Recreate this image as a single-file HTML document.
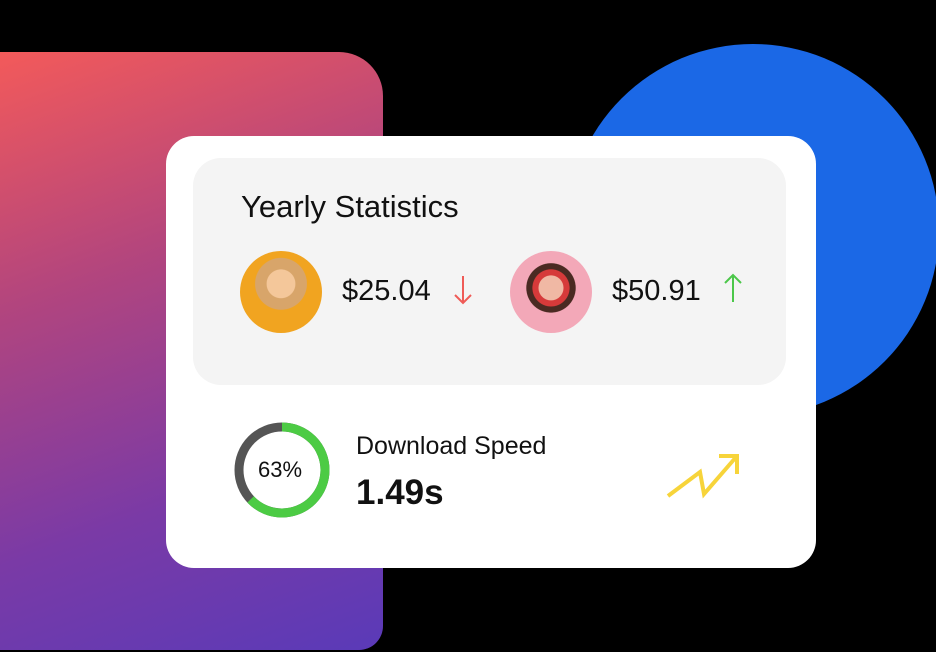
<!DOCTYPE html>
<html><head><style>
body{margin:0;width:936px;height:652px;background:#000;position:relative;overflow:hidden;font-family:"Liberation Sans",sans-serif;}
.grad{position:absolute;left:0;top:52px;width:383px;height:598px;border-radius:0 44px 24px 0;background:linear-gradient(160deg,#f35a5a 0%,#b2457e 35%,#7a3aa6 70%,#5a3ab8 100%);}
.blue{position:absolute;left:567px;top:44px;width:372px;height:372px;border-radius:50%;background:#1b68e6;}
.card{position:absolute;left:166px;top:136px;width:650px;height:432px;border-radius:28px;background:#fff;}
.panel{position:absolute;left:27px;top:22px;width:593px;height:227px;border-radius:28px;background:#f4f4f4;}
.t{position:absolute;color:#111;}
.av{position:absolute;width:82px;height:82px;border-radius:50%;}
</style></head><body>
<div class="grad"></div>
<div class="blue"></div>
<div class="card">
<div class="panel"></div>
<div class="t" style="left:75px;top:53px;font-size:31px;">Yearly Statistics</div>
<div class="av" style="left:74px;top:115px;background:radial-gradient(circle at 50% 40%,#f4c79a 0 22%,#d8a56a 23% 40%,#f1a420 41%);"></div>
<div class="t" style="left:176px;top:139px;font-size:29px;">$25.04</div>
<svg style="position:absolute;left:286px;top:138px" width="22" height="32"><path d="M11 2V29M3 21L11 29L19 21" stroke="#ef5b57" stroke-width="2" fill="none"/></svg>
<div class="av" style="left:344px;top:115px;background:radial-gradient(circle at 50% 45%,#f0b8a4 0 20%,#d63a3a 21% 30%,#4a2a22 31% 40%,#f3a8b8 41%);"></div>
<div class="t" style="left:446px;top:139px;font-size:29px;">$50.91</div>
<svg style="position:absolute;left:556px;top:136px" width="22" height="32"><path d="M11 30V3M3 11L11 3L19 11" stroke="#4cc74a" stroke-width="2" fill="none"/></svg>
<svg style="position:absolute;left:68px;top:286px" width="96" height="96"><circle cx="48" cy="48" r="43" stroke="#555" stroke-width="9" fill="none"/><circle cx="48" cy="48" r="43" stroke="#4ccb44" stroke-width="9" fill="none" stroke-dasharray="170 300" transform="rotate(-90 48 48)"/></svg>
<div class="t" style="left:92px;top:321px;font-size:22px;">63%</div>
<div class="t" style="left:190px;top:296px;font-size:25px;">Download Speed</div>
<div class="t" style="left:190px;top:337px;font-size:35px;font-weight:bold;">1.49s</div>
<svg style="position:absolute;left:498px;top:310px" width="80" height="56"><path d="M4 50L36 26L40 48L73 10M55 10H73V28" stroke="#f7d43a" stroke-width="4" fill="none"/></svg>
</div>
</body></html>
